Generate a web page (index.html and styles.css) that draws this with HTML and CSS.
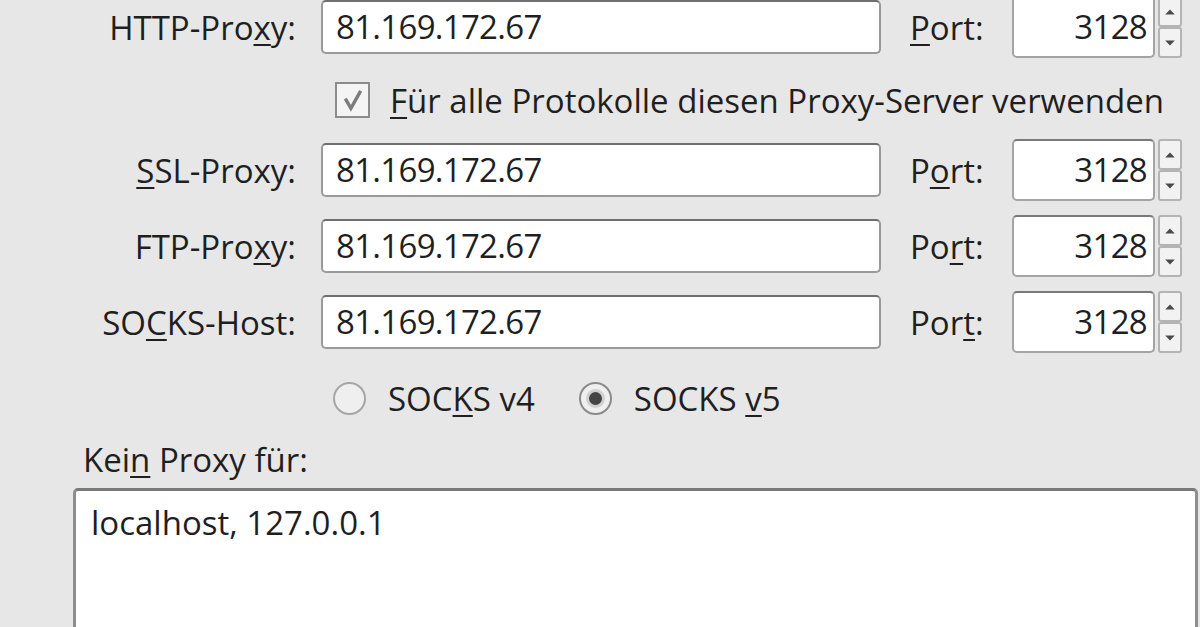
FILE: index.html
```html
<!DOCTYPE html>
<html lang="de">
<head>
<meta charset="utf-8">
<title>Verbindungs-Einstellungen</title>
<link rel="stylesheet" href="styles.css">
</head>
<body>
<div class="dialog">
  <div class="row row-first">
    <label class="lbl">HTTP-Pro<u>x</u>y:</label>
    <div class="field">81.169.172.67</div>
    <label class="port-lbl"><u>P</u>ort:</label>
    <div class="port">3128</div>
    <div class="spin"><span class="sb"><svg viewBox="0 0 10 6"><path d="M1 5 L5 1 L9 5 Z"/></svg></span><span class="sb"><svg viewBox="0 0 10 6"><path d="M1 1 L5 5 L9 1 Z"/></svg></span></div>
  </div>
  <div class="check-row">
    <span class="checkbox"><svg viewBox="0 0 20 20"><path d="M4.5 9 L8.5 16 L15.5 3.5" fill="none" stroke="#7c7c7c" stroke-width="2.4"/></svg></span>
    <span class="check-text"><u>F</u>ür alle Protokolle diesen Proxy-Server verwenden</span>
  </div>
  <div class="row row-ssl">
    <label class="lbl"><u>S</u>SL-Proxy:</label>
    <div class="field">81.169.172.67</div>
    <label class="port-lbl">P<u>o</u>rt:</label>
    <div class="port">3128</div>
    <div class="spin"><span class="sb"><svg viewBox="0 0 10 6"><path d="M1 5 L5 1 L9 5 Z"/></svg></span><span class="sb"><svg viewBox="0 0 10 6"><path d="M1 1 L5 5 L9 1 Z"/></svg></span></div>
  </div>
  <div class="row row-ftp">
    <label class="lbl">FTP-Pro<u>x</u>y:</label>
    <div class="field">81.169.172.67</div>
    <label class="port-lbl">Po<u>r</u>t:</label>
    <div class="port">3128</div>
    <div class="spin"><span class="sb"><svg viewBox="0 0 10 6"><path d="M1 5 L5 1 L9 5 Z"/></svg></span><span class="sb"><svg viewBox="0 0 10 6"><path d="M1 1 L5 5 L9 1 Z"/></svg></span></div>
  </div>
  <div class="row row-socks">
    <label class="lbl">SO<u>C</u>KS-Host:</label>
    <div class="field">81.169.172.67</div>
    <label class="port-lbl">Por<u>t</u>:</label>
    <div class="port">3128</div>
    <div class="spin"><span class="sb"><svg viewBox="0 0 10 6"><path d="M1 5 L5 1 L9 5 Z"/></svg></span><span class="sb"><svg viewBox="0 0 10 6"><path d="M1 1 L5 5 L9 1 Z"/></svg></span></div>
  </div>
  <div class="radio-row">
    <span class="radio"></span>
    <span class="radio-text">SOC<u>K</u>S v4</span>
    <span class="radio radio-on"><span class="dot"></span></span>
    <span class="radio-text">SOCKS <u>v</u>5</span>
  </div>
  <div class="noproxy-lbl">Kei<u>n</u> Proxy für:</div>
  <div class="textarea">localhost, 127.0.0.1</div>
</div>
</body>
</html>
```
FILE: styles.css
```css
html, body {
  margin: 0;
  padding: 0;
  background: #e7e7e7;
  height: 100%;
  overflow: hidden;
}
.dialog {
  font-family: "Open Sans", "Noto Sans", sans-serif;
  font-size: 33px;
  letter-spacing: 0;
  color: #1f1f1f;
}
u {
  text-decoration: underline;
  text-decoration-thickness: 2px;
  text-underline-offset: 4px;
}
.row {
  display: flex;
  align-items: center;
  height: 62px;
}
.row-first { margin-top: -4px; }
.row-ssl { margin-top: 21px; }
.row-ftp { margin-top: 14px; }
.row-socks { margin-top: 14px; }
.lbl {
  width: 296px;
  text-align: right;
  flex: none;
}
.field {
  margin-left: 25px;
  width: 543px;
  height: 50px;
  line-height: 50px;
  padding-left: 13px;
  letter-spacing: -0.7px;
  background: #fff;
  border: 2px solid #9a9a9a;
  border-top-color: #6f6f6f;
  border-radius: 5px;
  flex: none;
}
.port-lbl {
  margin-left: 29px;
  width: 102px;
  flex: none;
}
.port {
  width: 133px;
  height: 58px;
  line-height: 58px;
  padding-right: 6px;
  letter-spacing: -0.7px;
  text-align: right;
  background: #fff;
  border: 2px solid #a4a4a4;
  border-top-color: #7a7a7a;
  border-radius: 5px;
  flex: none;
}
.spin {
  margin-left: 3px;
  width: 24px;
  height: 62px;
  display: flex;
  flex-direction: column;
  flex: none;
}
.sb {
  flex: 1;
  display: flex;
  align-items: center;
  justify-content: center;
  background: #f2f2f2;
  border: 2px solid #b4b4b4;
  border-radius: 3px;
}
.sb svg {
  width: 12px;
  height: 8px;
  fill: #4a4a4a;
}
.check-row {
  display: flex;
  align-items: center;
  margin-top: 24px;
  margin-left: 335px;
  height: 36px;
}
.checkbox {
  width: 31px;
  height: 32px;
  border: 2px solid #8c8c8c;
  background: #f4f4f4;
  display: flex;
  align-items: center;
  justify-content: center;
  flex: none;
}
.checkbox svg {
  width: 28px;
  height: 28px;
}
.check-text {
  margin-left: 20px;
  white-space: nowrap;
}
.radio-row {
  display: flex;
  align-items: center;
  margin-top: 28px;
  margin-left: 333px;
  height: 34px;
}
.radio {
  width: 29px;
  height: 29px;
  border: 2px solid #a6a6a6;
  border-radius: 50%;
  background: #efefef;
  display: flex;
  align-items: center;
  justify-content: center;
  flex: none;
}
.radio-on {
  margin-left: 44px;
  border-color: #8a8a8a;
}
.dot {
  width: 13px;
  height: 13px;
  border-radius: 50%;
  background: #444;
  border: 3px solid #d0d0d0;
}
.radio-text {
  margin-left: 22px;
  white-space: nowrap;
}
.noproxy-lbl {
  margin-top: 25px;
  margin-left: 83px;
  height: 40px;
  line-height: 40px;
}
.textarea {
  margin-top: 8px;
  margin-left: 73px;
  width: 1104px;
  height: 122px;
  padding: 14px 0 0 15px;
  background: #fff;
  border: 3px solid #8e8e8e;
  border-bottom: none;
  border-top-color: #7a7a7a;
  border-radius: 5px 5px 0 0;
  line-height: 36px;
}
```
